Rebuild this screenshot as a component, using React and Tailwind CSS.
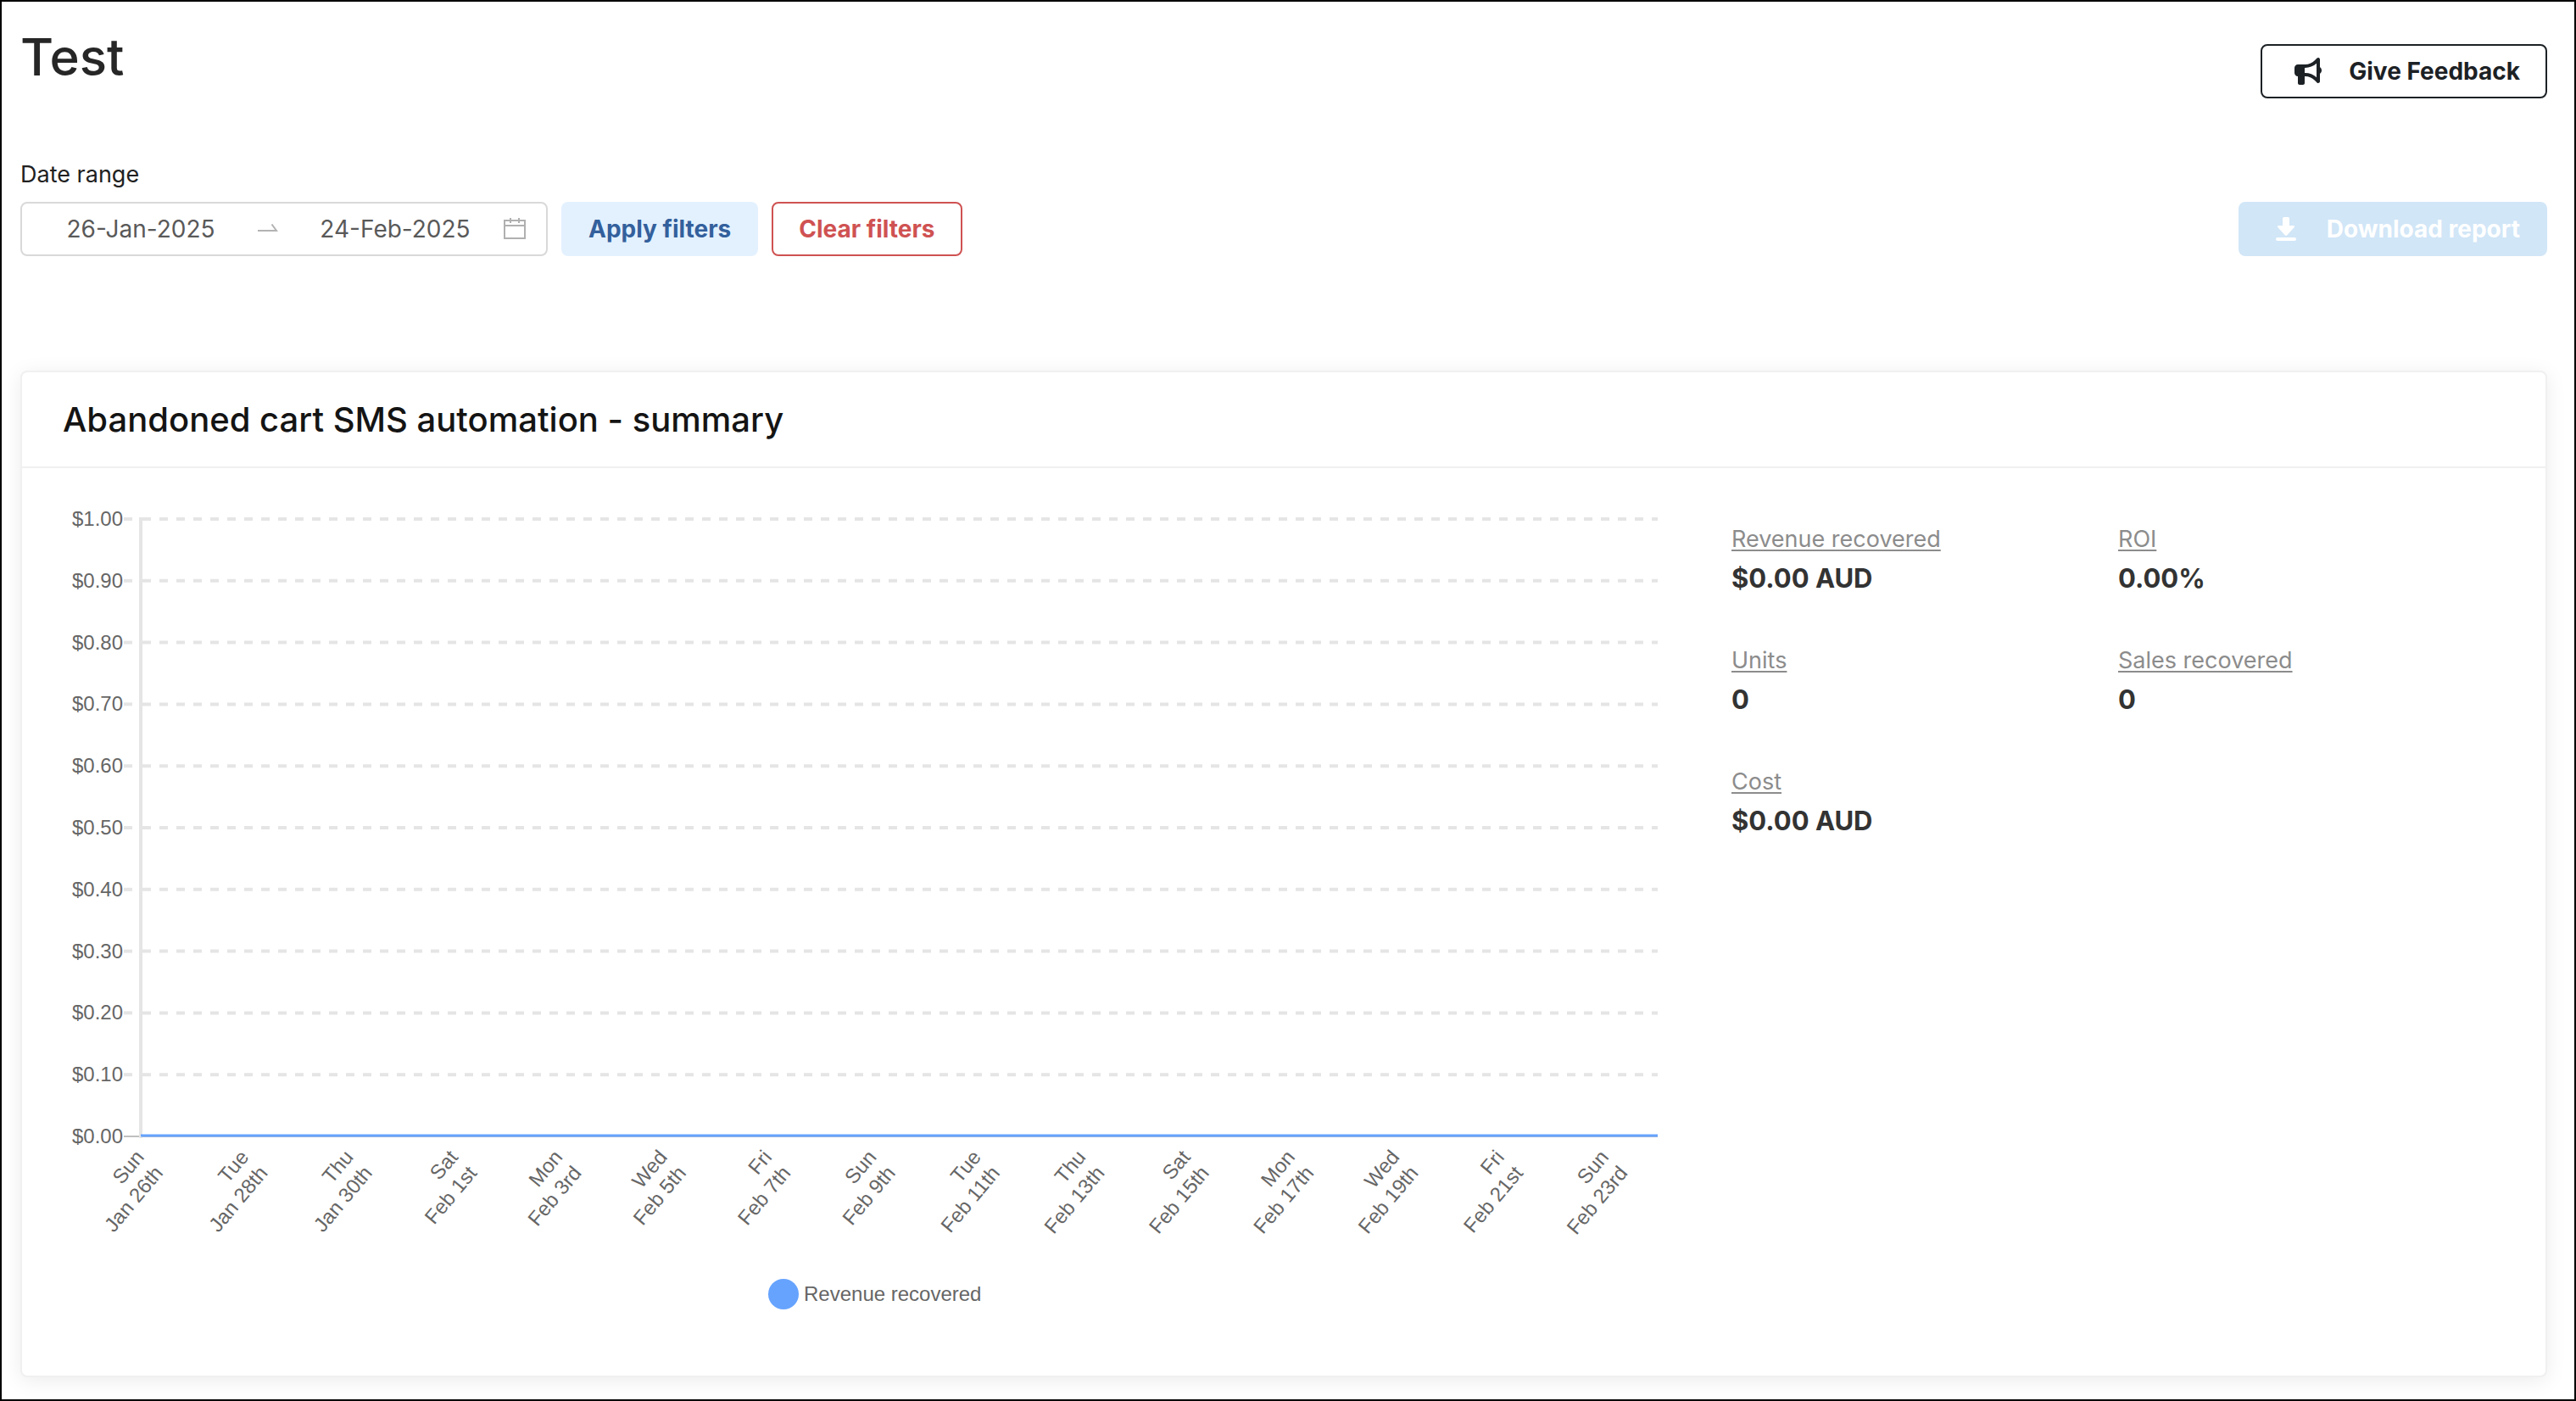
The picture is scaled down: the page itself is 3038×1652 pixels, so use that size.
import { FaBullhorn } from 'react-icons/fa6';

const amounts = ['$1.00', '$0.90', '$0.80', '$0.70', '$0.60', '$0.50', '$0.40', '$0.30', '$0.20', '$0.10', '$0.00'];

const days = [
  ['Sun', 'Jan 26th'],
  ['Tue', 'Jan 28th'],
  ['Thu', 'Jan 30th'],
  ['Sat', 'Feb 1st'],
  ['Mon', 'Feb 3rd'],
  ['Wed', 'Feb 5th'],
  ['Fri', 'Feb 7th'],
  ['Sun', 'Feb 9th'],
  ['Tue', 'Feb 11th'],
  ['Thu', 'Feb 13th'],
  ['Sat', 'Feb 15th'],
  ['Mon', 'Feb 17th'],
  ['Wed', 'Feb 19th'],
  ['Fri', 'Feb 21st'],
  ['Sun', 'Feb 23rd'],
];

const stats = [
  { label: 'Revenue recovered', value: '$0.00 AUD' },
  { label: 'ROI', value: '0.00%' },
  { label: 'Units', value: '0' },
  { label: 'Sales recovered', value: '0' },
  { label: 'Cost', value: '$0.00 AUD' },
];

// Plot area inside the 1920 x 974 viewBox
const LEFT = 92;
const RIGHT = 1881;
const TOP = 12;
const BOTTOM = 740;
const ROW = (BOTTOM - TOP) / 10;
const COL = ((RIGHT - LEFT) / 29) * 2;

function ArrowIcon() {
  return (
    <svg viewBox="0 0 24 12" className="mx-2.5 h-3 w-6 shrink-0" aria-hidden="true">
      <path d="M0 8H22L16.500 0.500" fill="none" stroke="#b3b3b3" strokeWidth="2" />
    </svg>
  );
}

function CalendarIcon() {
  return (
    <svg viewBox="0 0 26 26" className="h-[26px] w-[26px] shrink-0" aria-hidden="true">
      <path d="M1 3H25V24H1ZM1 9H25M8 0V6M18 0V6" fill="none" stroke="#b0b0b0" strokeWidth="2" />
    </svg>
  );
}

function DownloadIcon() {
  return (
    <svg viewBox="0 0 24 28" className="h-7 w-6 shrink-0" aria-hidden="true" fill="currentColor">
      <path d="M9.500 0H14.500Q16 0 16 1.500V10H20.500Q23 10.300 21.500 12.200L13.300 21.200Q12 22.300 10.700 21.200L2.500 12.200Q1 10.300 3.500 10H8V1.500Q8 0 9.500 0Z" />
      <rect x="0" y="24" width="24" height="4" rx="2" />
    </svg>
  );
}

function RevenueChart() {
  return (
    <svg
      viewBox="0 0 1920 974"
      className="block w-full overflow-visible"
      role="img"
      aria-label="Revenue recovered"
      fontFamily="'Liberation Sans', Arial, sans-serif"
      fontSize="24"
      fill="#666666"
    >
      {amounts.map((amount, i) => {
        const y = TOP + i * ROW;
        const last = i === amounts.length - 1;
        return (
          <g key={amount}>
            <text x="71" y={y + 8} textAnchor="end">
              {amount}
            </text>
            {last ? (
              <path d={`M72 ${y}H${RIGHT}`} stroke="#bfbfbf" strokeWidth="2" />
            ) : (
              <>
                <path d={`M72 ${y}H82`} stroke="#e5e5e5" strokeWidth="4" />
                <path d={`M94 ${y}H${RIGHT}`} stroke="#e5e5e5" strokeWidth="4" strokeDasharray="10 10" />
              </>
            )}
          </g>
        );
      })}
      <path d={`M${LEFT} ${TOP - 2}V${BOTTOM + 2}`} stroke="#e5e5e5" strokeWidth="4" />
      <path d={`M${LEFT} ${BOTTOM - 1}H${RIGHT}`} stroke="#66a3ff" strokeWidth="3" />

      {days.map(([day, date], i) => (
        <g key={date} textAnchor="end" transform={`translate(${LEFT - 1 + i * COL} 760) rotate(-50)`}>
          <text y="8">{day}</text>
          <text y="37">{date}</text>
        </g>
      ))}

      <circle cx="850" cy="926" r="18" fill="#66a3ff" />
      <text x="874" y="934">
        Revenue recovered
      </text>
    </svg>
  );
}

export default function App() {
  return (
    <main className="min-h-screen border-2 border-black bg-white pt-4 pr-8 pb-6 pl-[22px] font-['Inter',sans-serif] text-[27px] leading-8 text-[#212121]">
      <header className="flex items-start justify-between">
        <h1 className="text-[60px] leading-[98px] font-medium text-[#262626]">Test</h1>
        <button
          type="button"
          className="mt-[34px] flex h-16 items-center gap-8 rounded-lg border-2 border-[#1c2125] pr-[30px] pl-[38px] text-[28px] font-bold text-[#1c2125]"
        >
          <FaBullhorn className="h-8 w-8" aria-hidden="true" />
          Give Feedback
        </button>
      </header>

      <div className="mt-[74px] flex items-end justify-between">
        <div>
          <label htmlFor="start-date" className="block">
            Date range
          </label>
          <div className="mt-4 flex gap-4 text-[28px]">
            <div className="flex h-16 w-[622px] items-center rounded-lg border-2 border-[#d9d9d9] pr-6 pl-3 text-[#595959]">
              <input id="start-date" type="text" defaultValue="26-Jan-2025" className="w-0 flex-1 text-center" />
              <ArrowIcon />
              <input type="text" aria-label="End date" defaultValue="24-Feb-2025" className="w-0 flex-1 text-center" />
              <CalendarIcon />
            </div>
            <button type="button" className="h-16 rounded-lg bg-[#e3f1ff] px-8 font-bold text-[#33609c]">
              Apply filters
            </button>
            <button type="button" className="h-16 rounded-lg border-2 border-[#cf5252] px-[30px] font-bold text-[#cf5252]">
              Clear filters
            </button>
          </div>
        </div>
        <button
          type="button"
          disabled
          className="flex h-16 items-center gap-9 rounded-lg bg-[#d1e6f7] pr-8 pl-11 text-[28px] font-bold text-white"
        >
          <DownloadIcon />
          Download report
        </button>
      </div>

      <section className="mt-[135px] rounded-lg border-2 border-[#f0f0f0] bg-white shadow-[0_4px_24px_rgba(0,0,0,0.08)]">
        <h2 className="border-b-2 border-[#f0f0f0] px-12 py-8 text-[40px] leading-[47px] font-medium text-[#141414]">
          Abandoned cart SMS automation - summary
        </h2>
        <div className="grid grid-cols-3 p-12">
          <div className="col-span-2">
            <RevenueChart />
          </div>
          <dl className="grid grid-cols-2 content-start gap-y-15 pt-5 pl-12">
            {stats.map((stat) => (
              <div key={stat.label}>
                <dt className="text-[#8c8c8c] underline decoration-2 underline-offset-3">{stat.label}</dt>
                <dd className="mt-2 text-[31px] leading-[43px] font-bold text-[#333333]">{stat.value}</dd>
              </div>
            ))}
          </dl>
        </div>
      </section>
    </main>
  );
}
